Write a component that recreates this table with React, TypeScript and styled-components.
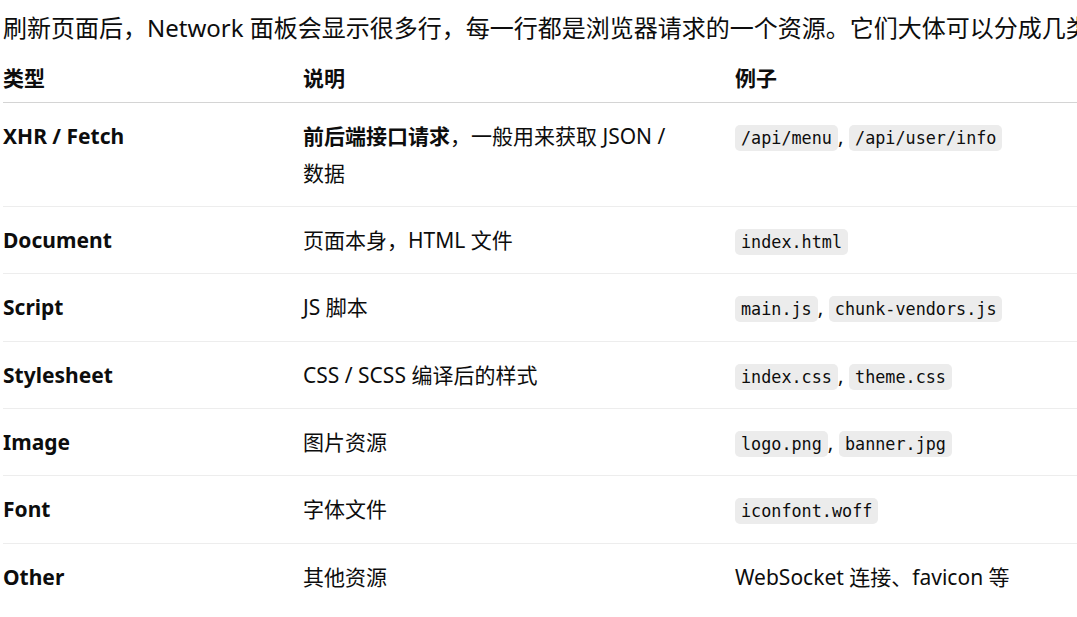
import React from "react";
import styled, { createGlobalStyle } from "styled-components";

const GlobalStyle = createGlobalStyle`
  html, body {
    margin: 0;
    padding: 0;
    background: #ffffff;
    overflow: hidden;
  }
`;

type Piece = { text: string; kind?: "bold" | "code" };

type Entry = {
  type: string;
  desc: Piece[];
  example: Piece[];
};

const entries: Entry[] = [
  {
    type: "XHR / Fetch",
    desc: [{ text: "前后端接口请求", kind: "bold" }, { text: "，一般用来获取 JSON / 数据" }],
    example: [{ text: "/api/menu", kind: "code" }, { text: ", " }, { text: "/api/user/info", kind: "code" }],
  },
  {
    type: "Document",
    desc: [{ text: "页面本身，HTML 文件" }],
    example: [{ text: "index.html", kind: "code" }],
  },
  {
    type: "Script",
    desc: [{ text: "JS 脚本" }],
    example: [{ text: "main.js", kind: "code" }, { text: ", " }, { text: "chunk-vendors.js", kind: "code" }],
  },
  {
    type: "Stylesheet",
    desc: [{ text: "CSS / SCSS 编译后的样式" }],
    example: [{ text: "index.css", kind: "code" }, { text: ", " }, { text: "theme.css", kind: "code" }],
  },
  {
    type: "Image",
    desc: [{ text: "图片资源" }],
    example: [{ text: "logo.png", kind: "code" }, { text: ", " }, { text: "banner.jpg", kind: "code" }],
  },
  {
    type: "Font",
    desc: [{ text: "字体文件" }],
    example: [{ text: "iconfont.woff", kind: "code" }],
  },
  {
    type: "Other",
    desc: [{ text: "其他资源" }],
    example: [{ text: "WebSocket 连接、favicon 等" }],
  },
];

const renderPieces = (pieces: Piece[]) =>
  pieces.map((p, i) => {
    if (p.kind === "bold") return <Strong key={i}>{p.text}</Strong>;
    if (p.kind === "code") return <Code key={i}>{p.text}</Code>;
    return <React.Fragment key={i}>{p.text}</React.Fragment>;
  });

export default function App() {
  return (
    <>
      <GlobalStyle />
      <Page>
        <Intro>
          刷新页面后，Network 面板会显示很多行，每一行都是浏览器请求的一个资源。它们大体可以分成几类：
        </Intro>
        <Table>
          <colgroup>
            <col style={{ width: 300 }} />
            <col style={{ width: 432 }} />
            <col />
          </colgroup>
          <thead>
            <tr>
              <Th>类型</Th>
              <Th>说明</Th>
              <Th>例子</Th>
            </tr>
          </thead>
          <tbody>
            {entries.map((e) => (
              <Row key={e.type}>
                <TypeCell>{e.type}</TypeCell>
                <Td>{renderPieces(e.desc)}</Td>
                <Td>{renderPieces(e.example)}</Td>
              </Row>
            ))}
          </tbody>
        </Table>
      </Page>
    </>
  );
}

const Page = styled.div`
  width: 1077px;
  height: 617px;
  overflow: hidden;
  box-sizing: border-box;
  padding: 7px 0 0 3px;
  color: #0d0d0d;
  font-family: "Noto Sans", "Noto Sans CJK SC", sans-serif;
`;

const Intro = styled.p`
  margin: 0;
  font-size: 24px;
  line-height: 42px;
  white-space: nowrap;
`;

const Table = styled.table`
  margin-top: 11px;
  width: 1140px;
  table-layout: fixed;
  border-collapse: collapse;
  font-size: 21px;
  line-height: 36.75px;
`;

const Th = styled.th`
  text-align: left;
  font-weight: 700;
  padding: 0 48px 5px 0;
  border-bottom: 1px solid #d4d4d4;
`;

const Row = styled.tr`
  border-bottom: 1px solid #ededed;
  &:last-child {
    border-bottom: none;
  }
`;

const Td = styled.td`
  vertical-align: top;
  padding: 15px 48px 14.6px 0;
`;

const TypeCell = styled(Td)`
  font-weight: 700;
`;

const Strong = styled.strong`
  font-weight: 700;
`;

const Code = styled.code`
  font-family: "DejaVu Sans Mono", "Liberation Mono", monospace;
  font-size: 16.8px;
  line-height: 23px;
  padding: 3px 6px;
  border-radius: 5px;
  background: #ececec;
  color: #0d0d0d;
`;
